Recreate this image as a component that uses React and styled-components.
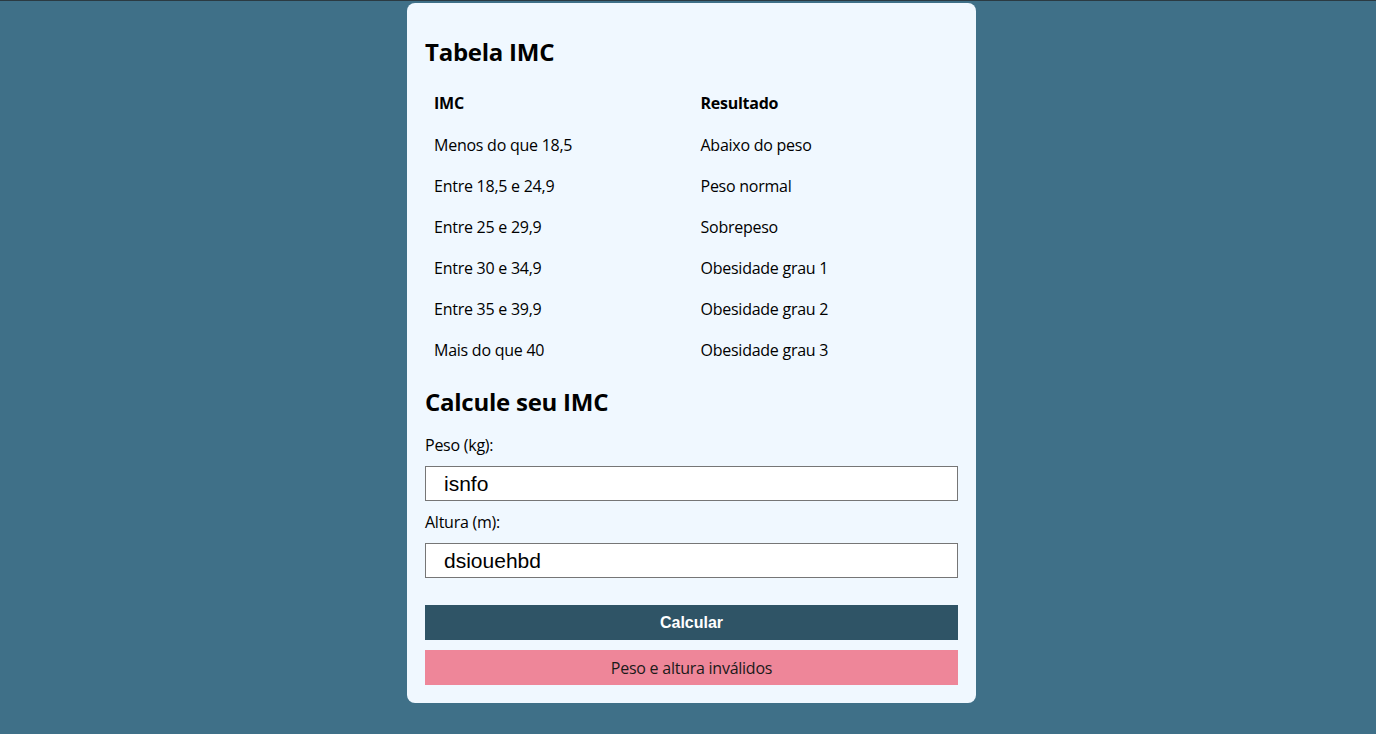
import React from "react";
import styled, { createGlobalStyle } from "styled-components";

const Global = createGlobalStyle`
  html, body { margin: 0; padding: 0; }
  body {
    background: #3f7088;
    border-top: 1px solid #2b3a42;
    font-family: "Open Sans", "Noto Sans", sans-serif;
    letter-spacing: -0.25px;
    color: #000;
    min-height: 733px;
  }
  * { box-sizing: border-box; }
`;

const Page = styled.div`
  display: flex;
  justify-content: center;
  padding: 2px 0 0 7px;
`;

const Card = styled.main`
  width: 569px;
  background: #f0f8ff;
  border-radius: 8px;
  padding: 32px 18px 18px;
  display: flex;
  flex-direction: column;
`;

const Title = styled.h2`
  margin: 0;
  font-size: 24px;
  line-height: 33px;
  font-weight: 700;
`;

const Table = styled.table`
  width: 100%;
  border-collapse: collapse;
  margin: 14px 0 15px;
  table-layout: fixed;
`;

const Th = styled.th`
  text-align: left;
  font-weight: 700;
  font-size: 16px;
  line-height: 22px;
  padding: 9.5px 9px 10.5px;
`;

const Td = styled.td`
  font-size: 16px;
  line-height: 22px;
  padding: 9.5px 9px;
`;

const Form = styled.form`
  display: flex;
  flex-direction: column;
  margin-top: 16px;
`;

const Label = styled.label`
  font-size: 16px;
  line-height: 22px;
  margin-bottom: 10px;
`;

const Input = styled.input`
  height: 35px;
  border: 1px solid #767676;
  background: #fff;
  padding: 0 18px;
  font-family: "Liberation Sans", Arial, sans-serif;
  font-size: 21px;
  letter-spacing: 0;
  color: #000;
  margin-bottom: 10px;
  outline: none;
`;

const Button = styled.button`
  margin-top: 17px;
  height: 35px;
  border: none;
  background: #2f5466;
  color: #fff;
  font-family: "Liberation Sans", Arial, sans-serif;
  font-weight: 700;
  font-size: 16px;
  letter-spacing: 0;
  cursor: pointer;
`;

const Error = styled.div`
  margin-top: 10px;
  height: 35px;
  background: #ee8699;
  color: #1a1a1a;
  font-size: 16px;
  display: flex;
  align-items: center;
  justify-content: center;
`;

const rows = [
  ["Menos do que 18,5", "Abaixo do peso"],
  ["Entre 18,5 e 24,9", "Peso normal"],
  ["Entre 25 e 29,9", "Sobrepeso"],
  ["Entre 30 e 34,9", "Obesidade grau 1"],
  ["Entre 35 e 39,9", "Obesidade grau 2"],
  ["Mais do que 40", "Obesidade grau 3"],
];

export default function App() {
  return (
    <>
      <Global />
      <Page>
        <Card>
          <Title>Tabela IMC</Title>
          <Table>
            <thead>
              <tr>
                <Th>IMC</Th>
                <Th>Resultado</Th>
              </tr>
            </thead>
            <tbody>
              {rows.map(([a, b]) => (
                <tr key={a}>
                  <Td>{a}</Td>
                  <Td>{b}</Td>
                </tr>
              ))}
            </tbody>
          </Table>
          <Title>Calcule seu IMC</Title>
          <Form onSubmit={(e) => e.preventDefault()}>
            <Label htmlFor="peso">Peso (kg):</Label>
            <Input id="peso" defaultValue="isnfo" />
            <Label htmlFor="altura">Altura (m):</Label>
            <Input id="altura" defaultValue="dsiouehbd" />
            <Button type="submit">Calcular</Button>
            <Error>Peso e altura inválidos</Error>
          </Form>
        </Card>
      </Page>
    </>
  );
}
